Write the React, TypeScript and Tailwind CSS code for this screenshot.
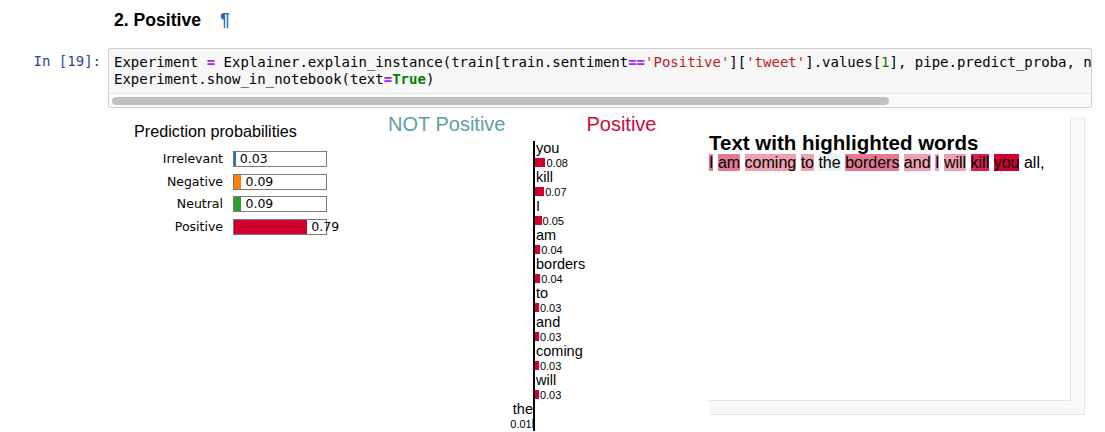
import React from 'react';

const probs = [
  { label: 'Irrelevant', value: 0.03, color: 'bg-[#1f77b4]' },
  { label: 'Negative', value: 0.09, color: 'bg-[#ff7f0e]' },
  { label: 'Neutral', value: 0.09, color: 'bg-[#2ca02c]' },
  { label: 'Positive', value: 0.79, color: 'bg-[#cf0030]' },
];

// weight > 0 goes to the Positive side, < 0 to NOT Positive
const features = [
  { word: 'you', w: 0.08 },
  { word: 'kill', w: 0.07 },
  { word: 'I', w: 0.05 },
  { word: 'am', w: 0.04 },
  { word: 'borders', w: 0.04 },
  { word: 'to', w: 0.03 },
  { word: 'and', w: 0.03 },
  { word: 'coming', w: 0.03 },
  { word: 'will', w: 0.03 },
  { word: 'the', w: -0.01 },
];

const highlighted = [
  { t: 'I', bg: 'bg-[#e0768c]' },
  { t: 'am', bg: 'bg-[#e37a90]' },
  { t: 'coming', bg: 'bg-[#eea2b1]' },
  { t: 'to', bg: 'bg-[#eea2b1]' },
  { t: 'the', bg: 'bg-[#e9f3f3]' },
  { t: 'borders', bg: 'bg-[#e37a90]' },
  { t: 'and', bg: 'bg-[#eea2b1]' },
  { t: 'I', bg: 'bg-[#eaa0ae]' },
  { t: 'will', bg: 'bg-[#eea2b1]' },
  { t: 'kill', bg: 'bg-[#d6234f]' },
  { t: 'you', bg: 'bg-[#cf0030]' },
];

const sans = "font-['Liberation_Sans',Arial,sans-serif]";
const mono = "font-['DejaVu_Sans_Mono',monospace]";

const App: React.FC = () => {
  return (
    <div className={`w-[1105px] h-[432px] overflow-hidden bg-white text-black ${sans}`}>
      {/* heading */}
      <div className="pt-[9px] pl-[114px] flex items-center h-[31px]">
        <span className="text-[17.6px] font-bold leading-[22px]">2. Positive</span>
        <span className="ml-[19px] text-[17.6px] font-bold leading-[22px] text-[#296eaa]">¶</span>
      </div>

      {/* code cell */}
      <div className="mt-[17px] flex">
        <div className={`w-[108px] pr-[7px] pt-[5px] text-right text-[14px] leading-[17px] text-[#303f9f] ${mono}`}>In [19]:</div>
        <div className="w-[984px] h-[60px] border border-[#cfcfcf] rounded-[2px] bg-[#f7f7f7] overflow-hidden flex flex-col">
          <div className={`pl-[5px] pt-[5px] text-[14px] leading-[17px] whitespace-pre ${mono} h-[44px]`}>
            <div>
              Experiment <span className="text-[#aa22ff] font-bold">=</span> Explainer.explain_instance(train[train.sentiment
              <span className="text-[#aa22ff] font-bold">==</span>
              <span className="text-[#ba2121]">'Positive'</span>][<span className="text-[#ba2121]">'tweet'</span>].values[
              <span className="text-[#008000]">1</span>], pipe.predict_proba, num_features<span className="text-[#aa22ff] font-bold">=</span>
              <span className="text-[#008000]">10</span>)
            </div>
            <div>
              Experiment.show_in_notebook(text<span className="text-[#aa22ff] font-bold">=</span>
              <span className="text-[#008000] font-bold">True</span>)
            </div>
          </div>
          <div className="flex-1 border-t border-[#e6e6e6] bg-[#fafafa] pl-[3px] pt-[3px]">
            <div className="w-[777px] h-[8px] rounded-full bg-[#c1c1c1]" />
          </div>
        </div>
      </div>

      {/* output */}
      <div className="flex">
        {/* prediction probabilities */}
        <div className="w-[370px] pt-[14px] flex flex-col">
          <div className="pl-[134px] text-[16.2px] leading-[18px]">Prediction probabilities</div>
          <div className="mt-[11px] flex flex-col gap-[6.7px] font-['DejaVu_Sans',sans-serif] text-[12.5px]">
            {probs.map((p) => (
              <div key={p.label} className="flex items-center h-[16px]">
                <div className="w-[223px] text-right leading-[16px]">{p.label}</div>
                <div className="ml-[10px] w-[94px] h-[16px] border-[1.5px] border-[#7a7a7a] flex items-stretch">
                  <div className={`shrink-0 ${p.color}`} style={{ width: `${p.value * 94 - 1}px` }} />
                  <div className="ml-[4px] leading-[13px] whitespace-nowrap">{p.value.toFixed(2)}</div>
                </div>
              </div>
            ))}
          </div>
        </div>

        {/* feature weights */}
        <div className="w-[339px] pt-[6px]">
          <div className="flex text-[20px] leading-[20px]">
            <span className="ml-[18px] text-[#5f9ea0]">NOT Positive</span>
            <span className="ml-[81px] text-[#cf0a3a]">Positive</span>
          </div>
          <div className="mt-[7px] flex flex-col">
            {features.map((f) => {
              const bar = Math.max(Math.abs(f.w) * 131, 1.3);
              const neg = f.w < 0;
              return (
                <div key={f.word} className="flex h-[29px]">
                  <div className="w-[163px] flex flex-col items-end">
                    {neg && (
                      <>
                        <div className="h-[14px] text-[14.5px] leading-[14px]">{f.word}</div>
                        <div className="h-[15px] flex items-center">
                          <span className="text-[11px] leading-[11px] mt-[2px]">{Math.abs(f.w).toFixed(2)}</span>
                          <div className="h-[9px] bg-[#5f9ea0]" style={{ width: `${bar}px` }} />
                        </div>
                      </>
                    )}
                  </div>
                  <div className="w-[2px] bg-black" />
                  <div className="flex-1 flex flex-col">
                    {!neg && (
                      <>
                        <div className="h-[14px] pl-[1px] text-[14.5px] leading-[14px]">{f.word}</div>
                        <div className="h-[15px] flex items-center">
                          <div className="h-[9px] bg-[#cf0030]" style={{ width: `${bar}px` }} />
                          <span className="ml-[1px] text-[11px] leading-[11px] mt-[2px]">{f.w.toFixed(2)}</span>
                        </div>
                      </>
                    )}
                  </div>
                </div>
              );
            })}
          </div>
        </div>

        {/* highlighted text, in a scrolling frame */}
        <div className="mt-[9px] w-[376px] h-[298px] bg-[#f8f8f8] border-r border-b border-[#e4e4e4]">
          <div className="w-[362px] h-[284px] bg-white border-r border-b border-[#e4e4e4] pt-[15px]">
            <div className="text-[20.5px] font-bold leading-[22px] whitespace-nowrap">Text with highlighted words</div>
            <div className="text-[16px] leading-[18px] whitespace-nowrap">
              {highlighted.map((h, i) => (
                <React.Fragment key={i}>
                  <span className={h.bg}>{h.t}</span>{' '}
                </React.Fragment>
              ))}
              all,
            </div>
          </div>
        </div>
      </div>
    </div>
  );
};

export default App;
